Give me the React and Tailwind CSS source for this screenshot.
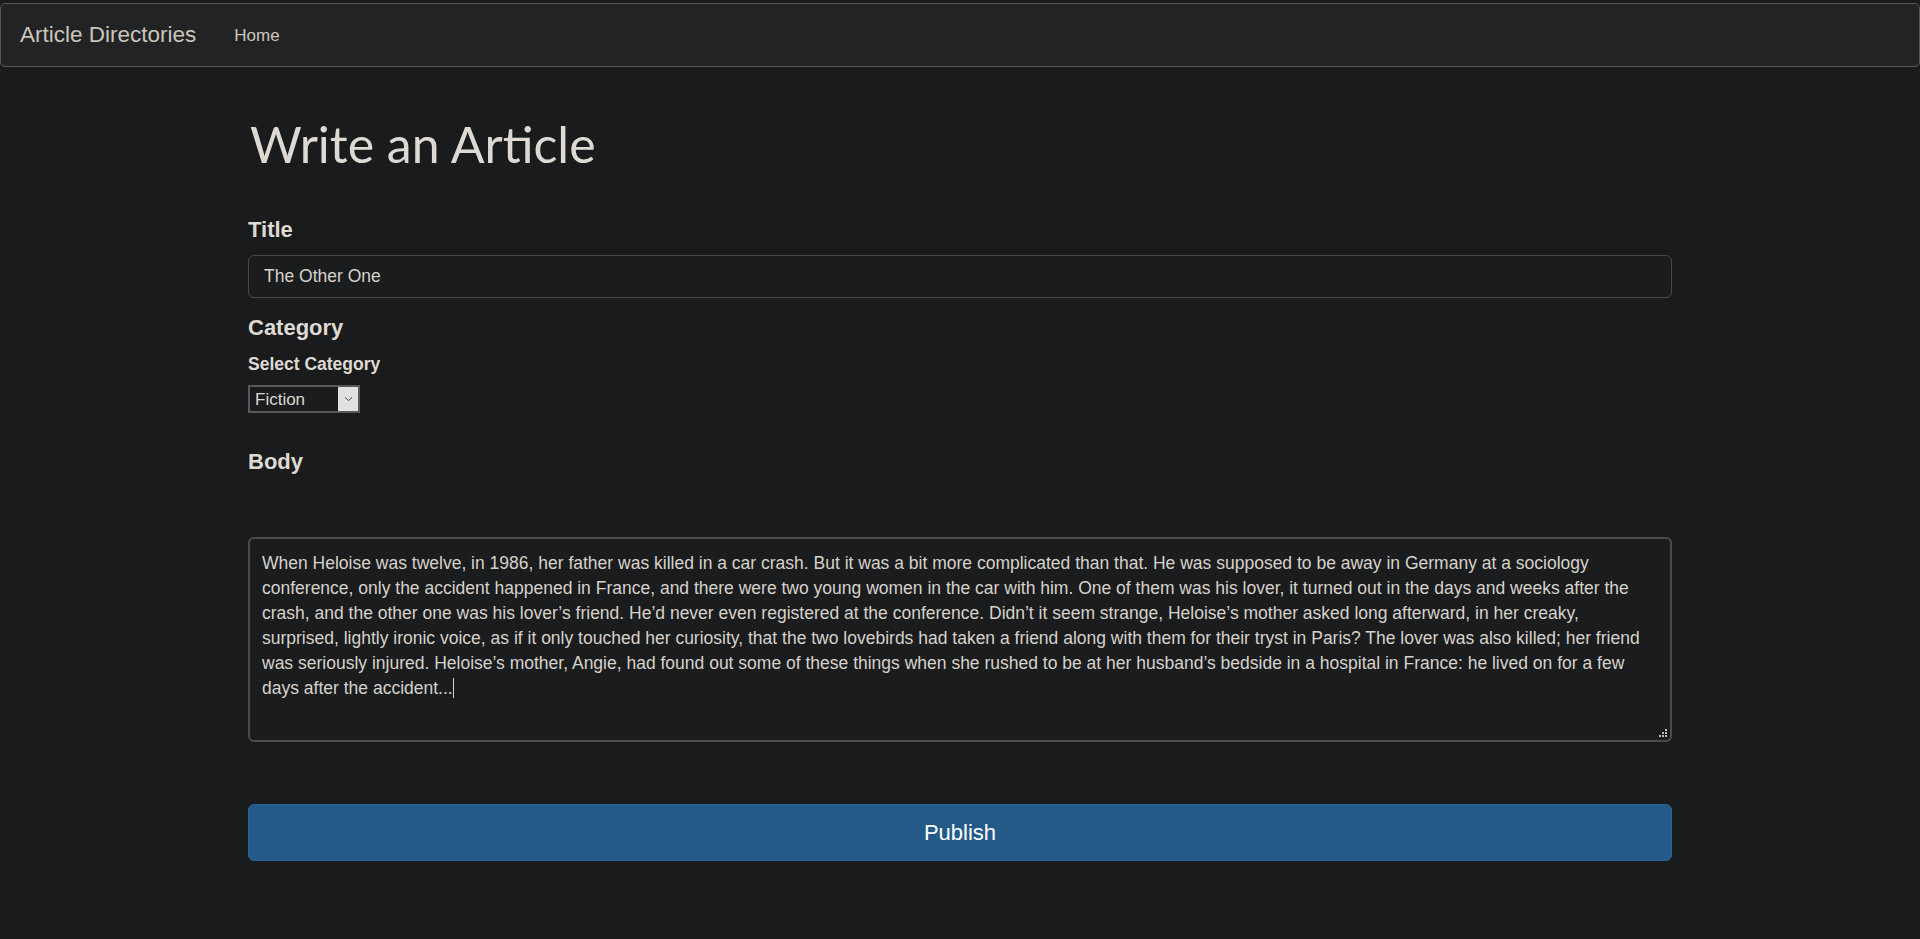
import React from "react";

export default function App() {
  const lines = [
    "When Heloise was twelve, in 1986, her father was killed in a car crash. But it was a bit more complicated than that. He was supposed to be away in Germany at a sociology",
    "conference, only the accident happened in France, and there were two young women in the car with him. One of them was his lover, it turned out in the days and weeks after the",
    "crash, and the other one was his lover\u2019s friend. He\u2019d never even registered at the conference. Didn\u2019t it seem strange, Heloise\u2019s mother asked long afterward, in her creaky,",
    "surprised, lightly ironic voice, as if it only touched her curiosity, that the two lovebirds had taken a friend along with them for their tryst in Paris? The lover was also killed; her friend",
    "was seriously injured. Heloise\u2019s mother, Angie, had found out some of these things when she rushed to be at her husband\u2019s bedside in a hospital in France: he lived on for a few",
  ];
  return (
    <div
      className="min-h-screen bg-[#1a1b1d] pt-[3px] text-[#dcd8d0]"
      style={{ fontFamily: '"Liberation Sans", Arial, sans-serif' }}
    >
      <nav className="h-[64px] border border-[#555658] rounded-[5px] bg-[#222325] flex items-center pl-[19px]">
        <span className="text-[22.5px] text-[#cbc6bd] leading-none">Article Directories</span>
        <span className="ml-[38px] text-[17px] text-[#cbc6bd] leading-none">Home</span>
      </nav>

      <main className="w-[1424px] mx-auto pt-[48px] pb-[79px]">
        <h1
          className="text-[50px] leading-[59px] font-normal text-[#dedad3] pl-[2px]"
          style={{ fontFamily: '"Comic Sans MS", "Lato", sans-serif' }}
        >
          Write an Article
        </h1>

        <h2 className="mt-[43px] text-[22px] leading-[26px] font-bold text-[#dedad3]">Title</h2>
        <div className="mt-[12px] h-[43px] border border-[#46484b] rounded-[6px] bg-[#1b1c1e] flex items-center pl-[15px] text-[17.5px] text-[#d6d2cb]">
          The Other One
        </div>

        <h2 className="mt-[17px] text-[22px] leading-[26px] font-bold text-[#dedad3]">Category</h2>
        <div className="mt-[13px] text-[17.5px] leading-[21px] font-bold text-[#dedad3]">Select Category</div>
        <div className="mt-[10px] w-[112px] h-[28px] border-2 border-[#58595b] bg-[#1b1c1e] flex items-stretch">
          <span className="flex-1 flex items-center pl-[5px] text-[17px] text-[#dcd8d0] leading-none">Fiction</span>
          <span className="w-[20px] bg-[#e1e1e1] flex items-center justify-center">
            <svg width="9" height="6" viewBox="0 0 9 6">
              <path d="M1 1.5 L4.5 4.5 L8 1.5" fill="none" stroke="#4a4a4a" strokeWidth="1" />
            </svg>
          </span>
        </div>

        <h2 className="mt-[36px] text-[22px] leading-[26px] font-bold text-[#dedad3]">Body</h2>

        <div className="relative mt-[62px] h-[205px] border-2 border-[#4b4c4e] rounded-[6px] bg-[#1b1c1e] pl-[12px] pr-[8px] pt-[12px] text-[17.5px] leading-[25px] text-[#d6d2cb]">
          {lines.map((l, i) => (
            <div key={i} className="whitespace-nowrap">{l}</div>
          ))}
          <div className="whitespace-nowrap">
            days after the accident...
            <span className="inline-block align-middle w-px h-[20px] bg-[#d6d2cb] -mt-[3px]"></span>
          </div>
          <svg className="absolute right-[2px] bottom-[2px]" width="9" height="9" viewBox="0 0 9 9">
            <rect x="6" y="0" width="2" height="2" fill="#bdbdbd" />
            <rect x="3" y="3" width="2" height="2" fill="#bdbdbd" />
            <rect x="6" y="3" width="2" height="2" fill="#bdbdbd" />
            <rect x="0" y="6" width="2" height="2" fill="#bdbdbd" />
            <rect x="3" y="6" width="2" height="2" fill="#bdbdbd" />
            <rect x="6" y="6" width="2" height="2" fill="#bdbdbd" />
          </svg>
        </div>

        <button className="mt-[62px] w-full h-[57px] rounded-[6px] bg-[#245a88] border border-[#2a6396] text-white text-[22px] flex items-center justify-center">
          Publish
        </button>
      </main>
    </div>
  );
}
